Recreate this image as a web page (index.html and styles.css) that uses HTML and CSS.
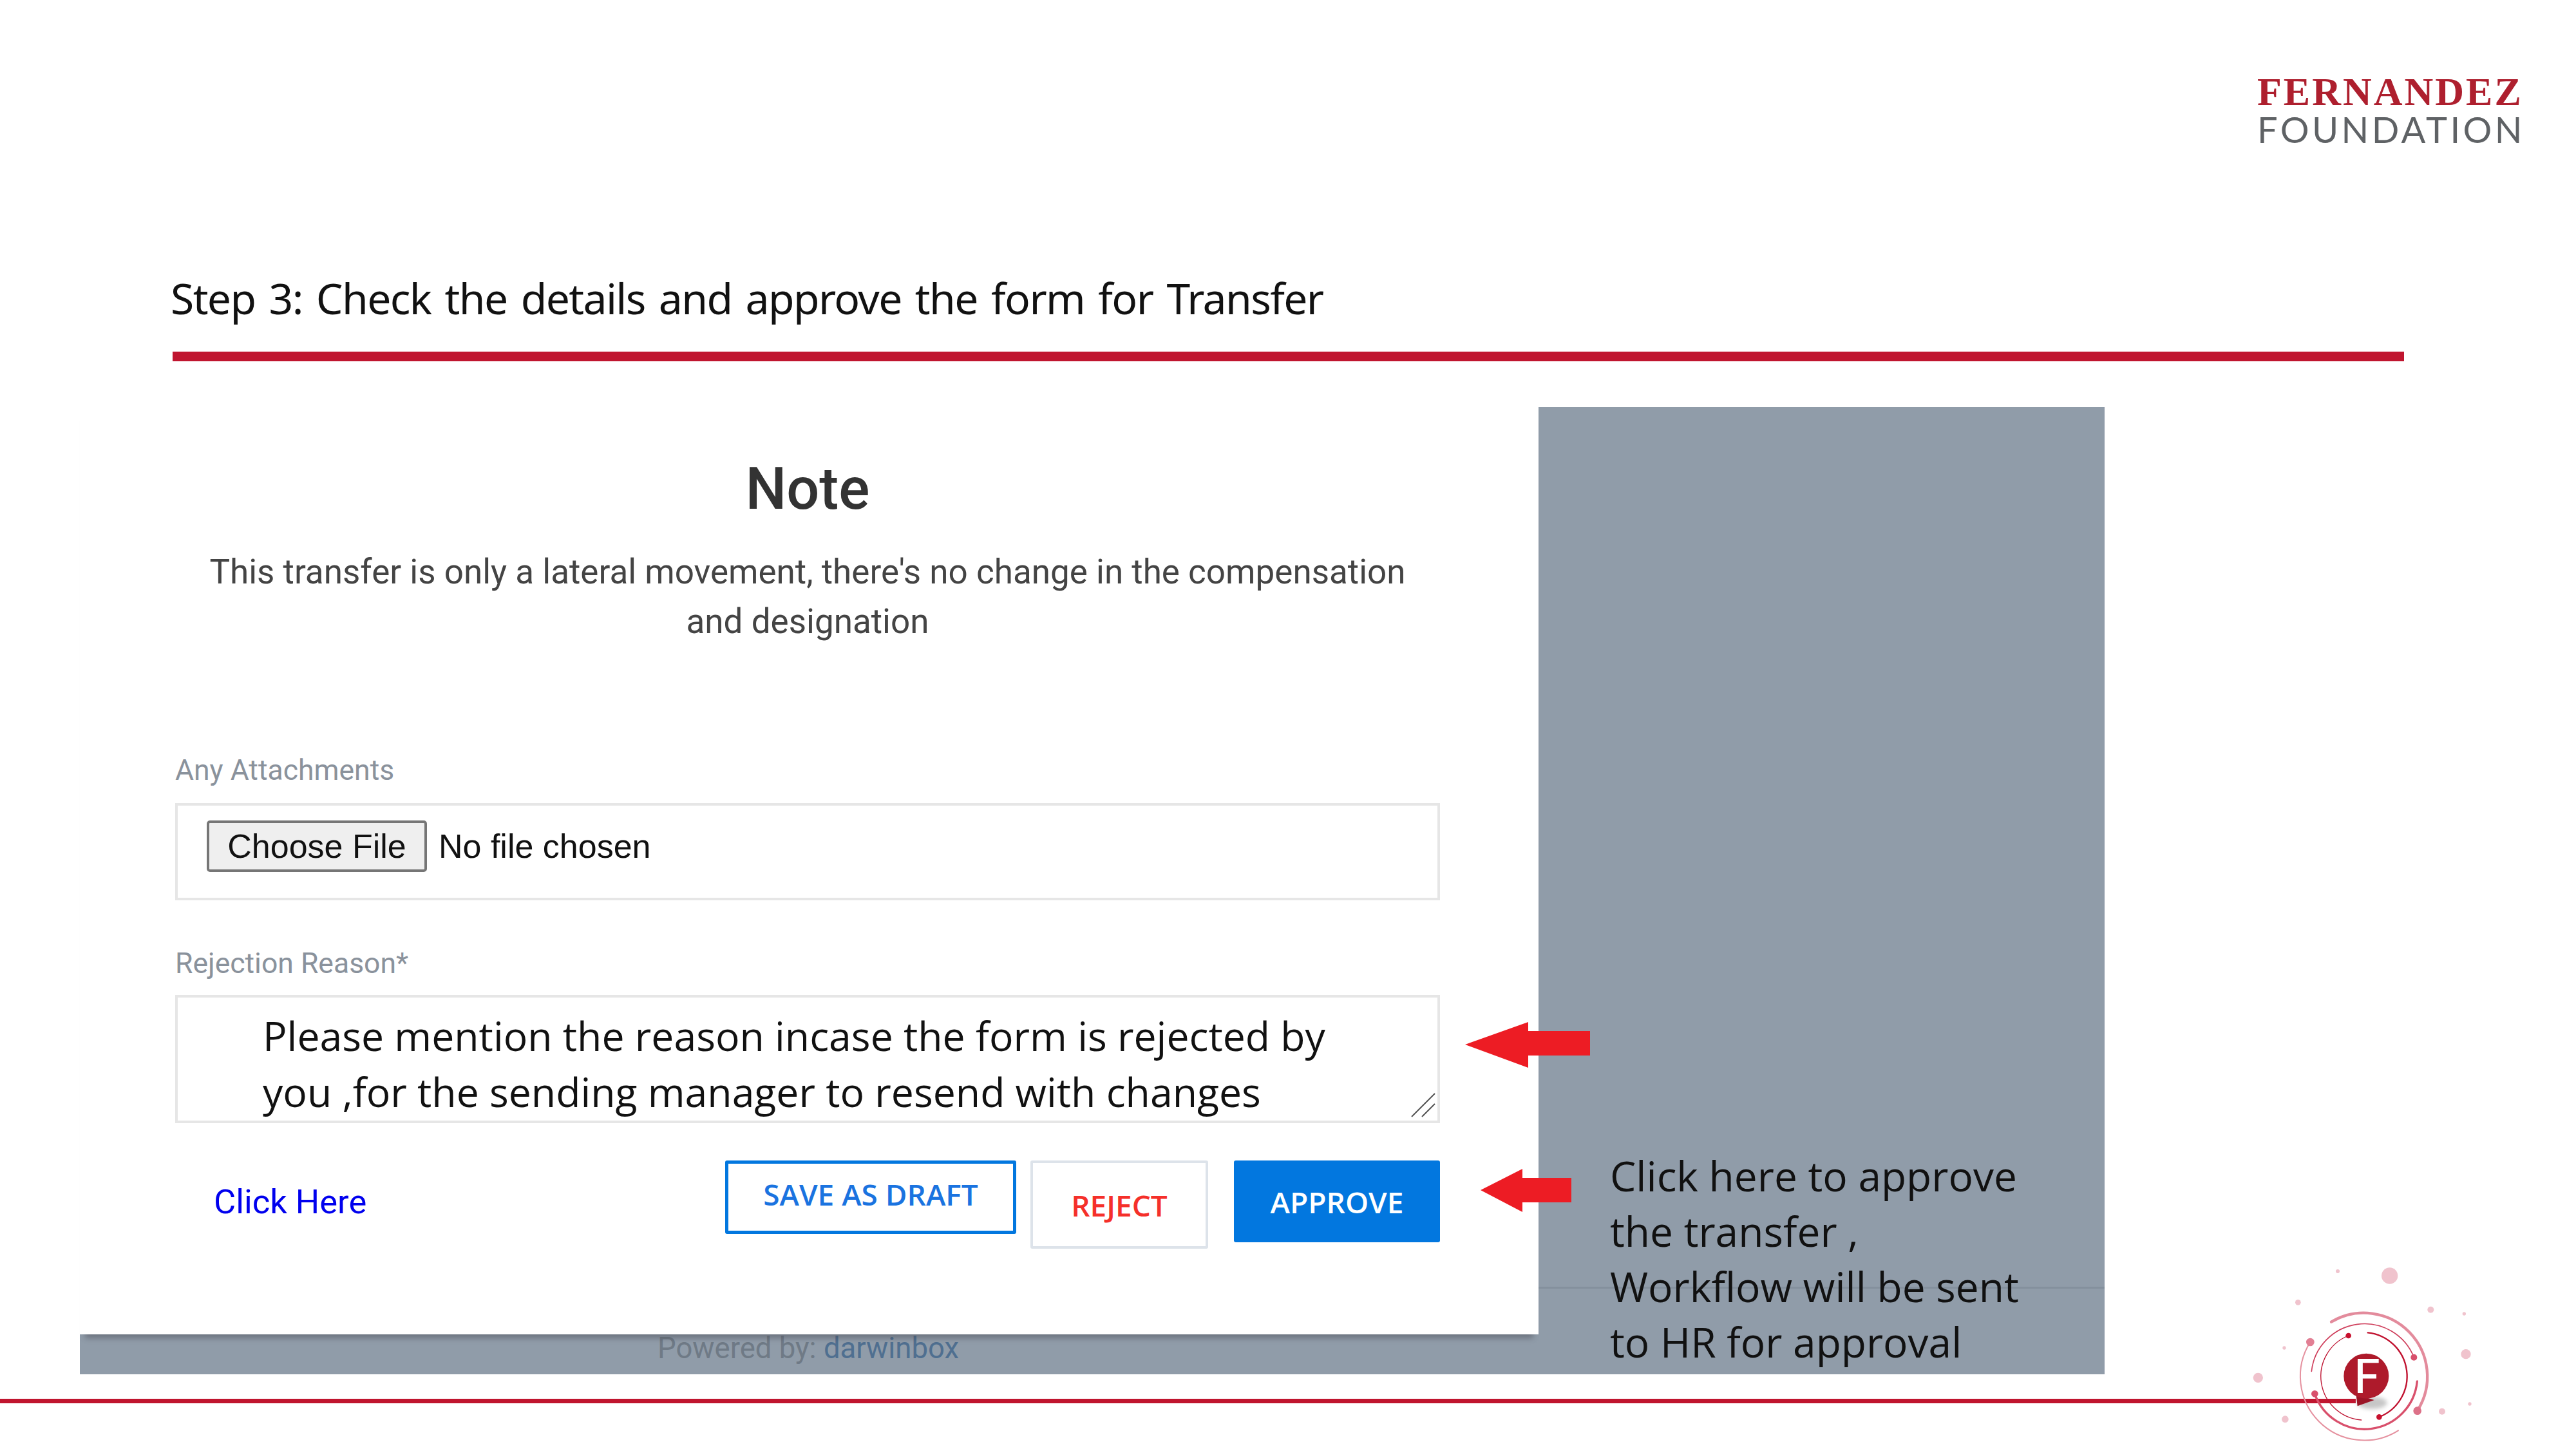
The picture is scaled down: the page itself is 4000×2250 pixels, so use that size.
FILE: index.html
```html
<!DOCTYPE html>
<html>
<head>
  <title>Step 3: Approve Transfer</title>
  <link rel="stylesheet" href="styles.css">
</head>
<body>

<div class="slide">
  <!-- Brand -->
  <div class="slide-head">
    <div class="brand">
      <div class="brand-name">FERNANDEZ</div>
      <div class="brand-sub">FOUNDATION</div>
    </div>
  </div>

  <h1 class="slide-title">Step 3: Check the details and approve the form for Transfer</h1>
  <div class="title-rule"></div>

  <!-- Screenshot of the form -->
  <div class="capture">
    <div class="modal">
      <h2 class="modal-title">Note</h2>
      <p class="modal-text">This transfer is only a lateral movement, there's no change in the compensation<br>and designation</p>

      <div class="field-label field-label-first">Any Attachments</div>
      <div class="file-box">
        <button class="file-button">Choose File</button>
        <span class="file-name">No file chosen</span>
      </div>

      <div class="field-label field-label-second">Rejection Reason*</div>
      <div class="text-box">
        Please mention the reason incase the form is rejected by<br>you ,for the sending manager to resend with changes
        <svg class="grip" viewBox="0 0 40 40">
          <path d="M2 38 L38 2 M18 38 L38 18" stroke="#555" stroke-width="2" fill="none"/>
        </svg>
      </div>

      <div class="actions">
        <a class="help-link">Click Here</a>
        <button class="btn btn-draft">SAVE AS DRAFT</button>
        <button class="btn btn-reject">REJECT</button>
        <button class="btn btn-approve">APPROVE</button>
      </div>
    </div>

    <div class="side">
      <div class="side-note">Click here to approve<br>the transfer ,<br>Workflow will be sent<br>to HR for approval</div>
    </div>

    <div class="powered">Powered by: <span class="powered-name">darwinbox</span></div>

    <!-- Annotation arrows -->
    <svg class="arrow arrow-reason" viewBox="0 0 194 71">
      <path d="M0 35 L98 0 L98 14 L194 14 L194 52 L98 52 L98 71 Z" fill="#ed1c24"/>
    </svg>
    <svg class="arrow arrow-approve" viewBox="0 0 141 67">
      <path d="M0 33 L65 0 L65 14 L141 14 L141 52 L65 52 L65 67 Z" fill="#ed1c24"/>
    </svg>
  </div>

  <div class="footer-rule"></div>

  <!-- Foundation mark, bottom right -->
  <svg class="mark" viewBox="0 0 1500 990">
    <defs>
      <filter id="markShadow" x="-30%" y="-30%" width="160%" height="160%">
        <feGaussianBlur stdDeviation="9"/>
      </filter>
    </defs>

    <g fill="#f0c3cd">
      <circle cx="932" cy="183" r="38"/>
      <circle cx="690" cy="162" r="9"/>
      <circle cx="505" cy="307" r="13"/>
      <circle cx="1123" cy="341" r="15"/>
      <circle cx="1279" cy="360" r="8"/>
      <circle cx="1287" cy="548" r="23"/>
      <circle cx="441" cy="519" r="8"/>
      <circle cx="319" cy="658" r="23"/>
      <circle cx="445" cy="851" r="16"/>
      <circle cx="1176" cy="815" r="15"/>
      <circle cx="1305" cy="780" r="8"/>
    </g>

    <g fill="none" stroke-linecap="round">
      <path d="M660 398 A296 296 0 0 1 1062 810" stroke="#e38b9c" stroke-width="13"/>
      <path d="M562 492 A298 298 0 0 0 972 904" stroke="#e5919f" stroke-width="6"/>
      <path d="M568 628 A248 248 0 0 1 1045 563" stroke="#cf3f5c" stroke-width="5"/>
      <path d="M1060 675 A246 246 0 0 1 583 733" stroke="#d9506c" stroke-width="10"/>
      <path d="M740 462 A204 204 0 0 0 800 855" stroke="#bd1230" stroke-width="4"/>
      <path d="M830 448 A204 204 0 0 1 883 841" stroke="#c0102e" stroke-width="7"/>
    </g>

    <circle cx="1061" cy="812" r="19" fill="#dd7188"/>
    <circle cx="562" cy="492" r="19" fill="#e27f94"/>
    <circle cx="1045" cy="563" r="15" fill="#d8506c"/>
    <circle cx="583" cy="733" r="16" fill="#d8506c"/>
    <circle cx="740" cy="462" r="13" fill="#c8102e"/>
    <circle cx="883" cy="841" r="13" fill="#c8102e"/>

    <ellipse cx="850" cy="775" rx="70" ry="28" fill="#999" opacity="0.55" filter="url(#markShadow)"/>
    <path d="M775 735 L782 790 L860 762 Z" fill="#9b1426"/>
    <circle cx="823" cy="650" r="105" fill="#ae1a2b"/>
    <text class="mark-letter" x="826" y="728" text-anchor="middle">F</text>
  </svg>
</div>

</body>
</html>
```

FILE: styles.css
```css
body {
  margin: 0;
  background-color: #FFF;
}
.slide {
  position: relative;
  width: 4000px;
  height: 2250px;
  overflow: hidden;
  background-color: #FFF;
}
.slide-head {
  display: flex;
  justify-content: flex-end;
  height: 397px;
  padding: 112px 83px 0 0;
  box-sizing: border-box;
}
.brand {
  width: 412px;
}
.brand-name {
  font-family: 'Liberation Serif', serif;
  font-weight: bold;
  font-size: 62px;
  line-height: 60px;
  letter-spacing: 3px;
  color: #AE1F2E;
}
.brand-sub {
  font-family: 'Lato', sans-serif;
  font-size: 56px;
  line-height: 58px;
  letter-spacing: 4.4px;
  color: #5F6265;
}
.slide-title {
  margin: 0 0 0 265px;
  font-family: 'Noto Sans', sans-serif;
  font-weight: normal;
  font-size: 66px;
  line-height: 130px;
  letter-spacing: -1.6px;
  word-spacing: 5.5px;
  color: #111;
}
.title-rule {
  width: 3465px;
  height: 15px;
  margin: 19px 0 71px 268px;
  background-color: #C0152F;
}
.capture {
  position: relative;
  display: flex;
  width: 3144px;
  height: 1502px;
  margin-left: 124px;
  background-color: #909CA9;
}
.modal {
  position: relative;
  z-index: 1;
  flex: none;
  width: 2265px;
  height: 1440px;
  padding: 78px 153px 0 148px;
  box-sizing: border-box;
  background-color: #FFF;
  box-shadow: 0 14px 8px -8px rgba(60,60,70,0.4);
  font-family: 'Roboto', sans-serif;
}
.modal-title {
  margin: 0 0 40px;
  text-align: center;
  font-size: 90px;
  font-weight: 500;
  line-height: 100px;
  color: #333;
}
.modal-text {
  margin: 0;
  text-align: center;
  font-size: 53px;
  line-height: 77px;
  color: #444;
}
.field-label {
  font-size: 44.5px;
  line-height: 60px;
  color: #8A929C;
}
.field-label-first {
  margin-top: 162px;
  margin-bottom: 21px;
}
.field-label-second {
  margin-top: 68px;
  margin-bottom: 19px;
}
.file-box {
  display: flex;
  align-items: flex-start;
  height: 151px;
  padding: 23px 0 0 45px;
  box-sizing: border-box;
  border: 4px solid #E6E6E6;
  font-family: 'Liberation Sans', sans-serif;
  font-size: 52px;
  color: #111;
}
.file-button {
  width: 342px;
  height: 80px;
  padding: 0;
  margin-right: 18px;
  box-sizing: border-box;
  border: 4px solid #767676;
  border-radius: 5px;
  background-color: #EFEFEF;
  font-family: inherit;
  font-size: 52px;
  color: #111;
}
.file-name {
  line-height: 80px;
}
.text-box {
  position: relative;
  height: 199px;
  padding: 15px 0 0 132px;
  box-sizing: border-box;
  border: 4px solid #E6E6E6;
  font-family: 'Open Sans', sans-serif;
  font-size: 62.5px;
  line-height: 87px;
  color: #111;
}
.grip {
  position: absolute;
  right: 2px;
  bottom: 4px;
  width: 40px;
  height: 40px;
}
.actions {
  display: flex;
  align-items: flex-start;
  margin-top: 58px;
}
.help-link {
  margin: 30px auto 0 60px;
  font-size: 52.5px;
  line-height: 68px;
  color: #0000EE;
}
.btn {
  box-sizing: border-box;
  padding: 0;
  border-radius: 3px;
  font-family: 'Open Sans', sans-serif;
  font-size: 46px;
  font-weight: 600;
  background-color: #FFF;
}
.btn-draft {
  width: 452px;
  height: 114px;
  margin-right: 22px;
  padding-bottom: 10px;
  border: 5px solid #0277DF;
  color: #1A73E0;
}
.btn-reject {
  width: 276px;
  height: 137px;
  margin-right: 40px;
  border: 4px solid #DDE3EA;
  color: #F5302A;
}
.btn-approve {
  width: 320px;
  height: 127px;
  border: none;
  background-color: #0277DF;
  color: #FFF;
}
.side {
  position: relative;
  flex: 1;
  display: flex;
  align-items: flex-end;
  padding: 0 0 7px 111px;
  font-family: 'Open Sans', sans-serif;
  font-size: 64px;
  line-height: 86px;
  color: #111;
}
.side::before {
  content: "";
  position: absolute;
  left: 0;
  right: 0;
  top: 1366px;
  height: 3px;
  background-color: #84909D;
}
.side-note {
  position: relative;
}
.powered {
  position: absolute;
  left: 897px;
  top: 1432px;
  font-family: 'Roboto', sans-serif;
  font-size: 45.5px;
  line-height: 60px;
  color: #6F7A86;
}
.powered-name {
  color: #4F6F90;
}
.arrow {
  position: absolute;
  z-index: 2;
}
.arrow-reason {
  left: 2151px;
  top: 955px;
  width: 194px;
  height: 71px;
}
.arrow-approve {
  left: 2175px;
  top: 1183px;
  width: 141px;
  height: 67px;
}
.footer-rule {
  width: 3658px;
  height: 7px;
  margin-top: 38px;
  background-color: #C0152F;
}
.mark {
  position: absolute;
  left: 3400px;
  top: 1920px;
  width: 500px;
  height: 330px;
}
.mark-letter {
  font-family: 'Lato', sans-serif;
  font-size: 220px;
  font-weight: 500;
  fill: #FFF;
}
```
